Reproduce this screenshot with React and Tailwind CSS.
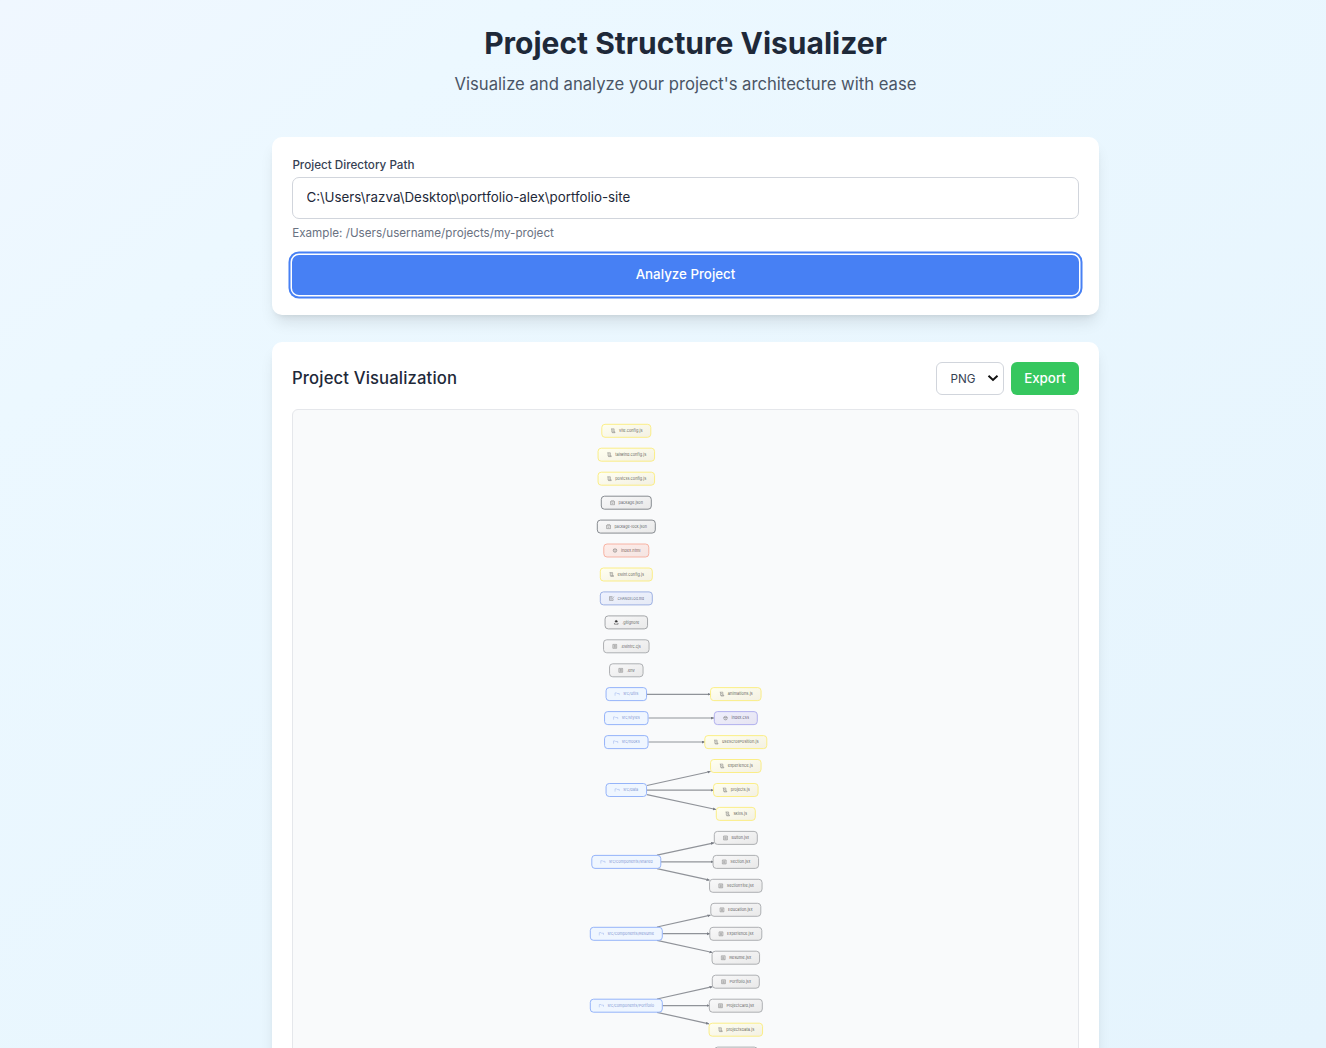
import React from 'react';

const PALETTE = {
  js: { stroke: '#fbec7c', fill: 'url(#js)', text: '#4b4b45', icon: 'scroll' },
  json: { stroke: '#7c8086', fill: 'url(#gray)', text: '#4b4f55', icon: 'box' },
  html: { stroke: '#f6ab9b', fill: 'url(#html)', text: '#6b4b48', icon: 'globe' },
  md: { stroke: '#94a9e0', fill: 'url(#md)', text: '#4b5268', icon: 'note' },
  file: { stroke: '#a6a8ab', fill: 'url(#gray)', text: '#4b4b4b', icon: 'doc' },
  git: { stroke: '#9b9da0', fill: 'url(#gray)', text: '#4b4b4b', icon: 'lock' },
  css: { stroke: '#aaa9ec', fill: 'url(#css)', text: '#4d4963', icon: 'globe' },
  dir: { stroke: '#8aacf8', fill: '#eff6ff', text: '#7088cc', icon: 'folder' },
};

// [label, kind, centre x, centre y, node width]
const NODES = [
  ['vite.config.js', 'js', 626.3, 430.8, 49],
  ['tailwind.config.js', 'js', 626.3, 454.7, 56.5],
  ['postcss.config.js', 'js', 626.3, 478.7, 56.5],
  ['package.json', 'json', 626.3, 502.7, 50],
  ['package-lock.json', 'json', 626.3, 526.6, 58],
  ['index.html', 'html', 626.3, 550.5, 45],
  ['eslint.config.js', 'js', 626.3, 574.5, 52],
  ['CHANGELOG.md', 'md', 626.3, 598.4, 52],
  ['.gitignore', 'git', 626.3, 622.4, 42.5],
  ['.eslintrc.cjs', 'file', 626.3, 646.3, 45.5],
  ['.env', 'file', 626.3, 670.3, 33.5],
  ['src/utils', 'dir', 626.3, 694.1, 40.5],
  ['src/styles', 'dir', 626.3, 718.1, 43.5],
  ['src/hooks', 'dir', 626.3, 742.1, 43.5],
  ['src/data', 'dir', 626.3, 790, 40.5],
  ['src/components/shared', 'dir', 626.3, 861.9, 69],
  ['src/components/Resume', 'dir', 626.3, 933.8, 72],
  ['src/components/Portfolio', 'dir', 626.3, 1005.7, 72],
  ['animations.js', 'js', 735.8, 694.1, 50.5],
  ['index.css', 'css', 735.8, 718.1, 43],
  ['useScrollPosition.js', 'js', 735.8, 742.1, 62],
  ['experience.js', 'js', 735.8, 766, 50.5],
  ['projects.js', 'js', 735.8, 790, 44.5],
  ['skills.js', 'js', 735.8, 813.9, 39],
  ['Button.jsx', 'file', 735.8, 837.9, 43],
  ['Section.jsx', 'file', 735.8, 861.9, 45.5],
  ['SectionTitle.jsx', 'file', 735.8, 885.8, 52.5],
  ['Education.jsx', 'file', 735.8, 909.8, 50],
  ['Experience.jsx', 'file', 735.8, 933.8, 52],
  ['Resume.jsx', 'file', 735.8, 957.7, 47.5],
  ['Portfolio.jsx', 'file', 735.8, 981.7, 47],
  ['ProjectCard.jsx', 'file', 735.8, 1005.7, 53],
  ['projectsData.js', 'js', 735.8, 1029.7, 53.5],
];

const EDGES = [
  [647, 694.3, 710.5, 694.3],
  [648.5, 718, 714, 718],
  [648.5, 742, 705, 742],
  [647, 785.5, 710.5, 771.5],
  [647, 790.2, 713.5, 790.2],
  [647, 794.6, 716, 809.5],
  [657, 855.2, 714, 842.8],
  [661, 861.8, 713.5, 861.8],
  [657, 868.7, 709.5, 880.2],
  [657, 927, 710.5, 915.2],
  [662.5, 933.7, 710, 933.7],
  [657, 940.4, 712.5, 952.5],
  [657, 999, 712.5, 986.7],
  [662.5, 1005.6, 709.5, 1005.6],
  [657, 1012.3, 709, 1023.8],
];

function Glyph({ kind, x, y }) {
  const shapes = {
    scroll: <path d="M-1.2 1.2V-1.9H1.1V1M-2-1.9H-1.2M-.8 1.9H2V1.1H-.8ZM-.6-.6H.5" />,
    box: <path d="M-1.9-1.2L-1.3-1.9H1.4L2-1.2V2H-1.9ZM-1.9-.8H2M-.8 .7H.9" />,
    globe: <path d="M-1.8 0A1.8 1.8 0 1 0 1.8 0 1.8 1.8 0 1 0-1.8 0M-1.8-.6H1.8M-.6 .8H.8" />,
    note: <path d="M1.6.3V2H-2V-1.8H1M-1.3-.6H.4M-1.3.6H.2M.2.8L2.5-1.8" />,
    doc: <path d="M-1.9-1.9H1.9V2H-1.9ZM-1.1-.8H1.1M-1.1 .1H1.1M-1.1 1H1.1" />,
    lock: <path d="M-1.1-.3V-1A1.1 1 0 0 1 1.1-1V-.3ZM-1.8 1.8V.6M1.8 1.8V.6M-1.8 1.8H1.8" />,
    folder: <path d="M-2.2 1.6V-1.2H-.6L-.1-.6H2V1" />,
  };
  const color = kind === 'folder' ? '#9ab2ec' : kind === 'lock' ? '#333333' : '#777777';
  return (
    <g transform={`translate(${x} ${y})`} fill={kind === 'lock' ? color : 'none'} stroke={color} strokeWidth="0.5">
      {shapes[kind]}
    </g>
  );
}

function Node({ node }) {
  const [label, kind, cx, cy, w] = node;
  const p = PALETTE[kind];
  const left = cx - w / 2;
  return (
    <g>
      <rect x={left} y={cy - 6.5} width={w} height="13" rx="3.2" fill={p.fill} stroke={p.stroke} strokeWidth="0.9" />
      <Glyph kind={p.icon} x={left + 11.2} y={cy} />
      <text x={left + 17.2} y={cy + 1.35} fontSize="4" fill={p.text} fillOpacity="0.9" textLength={w - 25.5} lengthAdjust="spacingAndGlyphs">
        {label}
      </text>
    </g>
  );
}

function Tint({ id, from, to }) {
  return (
    <linearGradient id={id} x1="0" y1="0" x2="1" y2="1">
      <stop stopColor={from} />
      <stop offset="1" stopColor={to} />
    </linearGradient>
  );
}

function Diagram() {
  return (
    <svg className="block h-[700px] w-full" viewBox="293 410 785 700" fontFamily="Inter, sans-serif">
      <defs>
        <Tint id="js" from="#fffff0" to="#f3f0e3" />
        <Tint id="gray" from="#f8f8f9" to="#e9e9e9" />
        <Tint id="html" from="#feeeea" to="#f4e4e2" />
        <Tint id="md" from="#eef2ff" to="#e6eaf5" />
        <Tint id="css" from="#eeeefd" to="#e7e5f1" />
        <marker id="arrow" markerWidth="4" markerHeight="4" refX="3" refY="1.5" orient="auto" markerUnits="userSpaceOnUse">
          <path d="M0 0L3 1.5L0 3Z" fill="#777b83" />
        </marker>
      </defs>
      {EDGES.map(([x1, y1, x2, y2]) => (
        <line key={`${x1}-${y1}-${y2}`} x1={x1} y1={y1} x2={x2} y2={y2} stroke="#909399" strokeWidth="1.2" markerEnd="url(#arrow)" />
      ))}
      {NODES.map((node) => (
        <Node key={node[0]} node={node} />
      ))}
      <rect x="714.5" y="1047.1" width="43" height="13" rx="3.2" fill="url(#gray)" stroke="#a6a8ab" strokeWidth="0.9" />
    </svg>
  );
}

export default function App() {
  return (
    <div className="h-[1048px] overflow-hidden bg-linear-to-br from-[#f0f7ff] via-[#ecf8ff] via-20% to-[#e5f4fd] font-['Inter',sans-serif]">
      <div className="ml-[272px] w-[827px] pt-[23px]">
        <header className="text-center">
          <h1 className="text-[30px] leading-10 font-bold text-gray-800">Project Structure Visualizer</h1>
          <p className="mt-[7px] text-[16.67px] leading-7 text-gray-600">Visualize and analyze your project's architecture with ease</p>
        </header>

        <section className="mt-[39px] h-[178px] rounded-[10px] bg-white px-5 pt-5 shadow-lg">
          <label className="block pl-[0.4px] text-[11.67px] leading-4 font-medium text-gray-700">Project Directory Path</label>
          <input
            className="mt-1 block h-[42px] w-full rounded-[7px] border border-gray-300 px-[13.5px] pb-0.5 text-[13.33px] text-gray-800 outline-none"
            defaultValue="C:\Users\razva\Desktop\portfolio-alex\portfolio-site"
          />
          <p className="mt-1.5 pl-[0.2px] text-[11.67px] leading-4 text-gray-500">Example: /Users/username/projects/my-project</p>
          <button className="mt-3.5 block h-10 w-full rounded-[7px] bg-[#4780f4] text-[13.33px] font-medium text-white ring-2 ring-[#4780f4] ring-offset-[1.5px]">
            Analyze Project
          </button>
        </section>

        <section className="mt-[27px] h-[800px] rounded-[10px] bg-white p-5 shadow-lg">
          <div className="flex h-[33px] items-center justify-between">
            <h2 className="text-[16.67px] font-medium tracking-[0.14px] text-gray-800">Project Visualization</h2>
            <div className="flex gap-[7px]">
              <button className="flex h-[33px] w-[68px] items-center justify-between rounded-[6px] border border-gray-300 pr-1 pl-[13.5px] text-[11.67px] text-gray-700">
                <span className="pt-0.5">PNG</span>
                <svg className="mb-px h-3 w-3" viewBox="0 0 12 12" fill="none" stroke="#111111" strokeWidth="2">
                  <path d="M1.5 3.8L6 8L10.5 3.8" />
                </svg>
              </button>
              <button className="h-[33px] w-[68px] rounded-[6px] bg-[#36c75f] text-[13.33px] font-medium text-white">Export</button>
            </div>
          </div>
          <div className="mt-3.5 overflow-hidden rounded-[6px] border border-gray-200 bg-[#f9fafb]">
            <Diagram />
          </div>
        </section>
      </div>
    </div>
  );
}
